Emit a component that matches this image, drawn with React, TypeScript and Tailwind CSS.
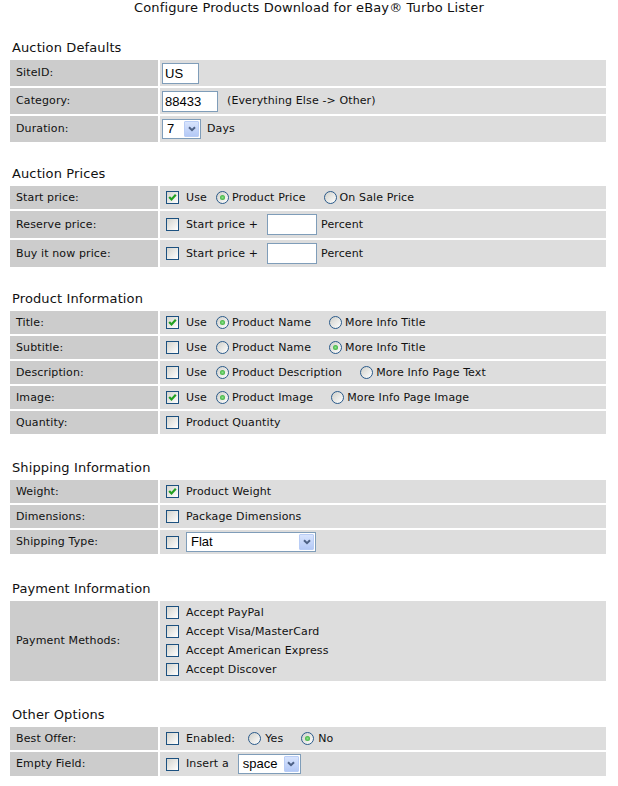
import clsx from 'clsx';

const Check = ({ checked }: { checked?: boolean }) => (
  <span className="ml-[4px] flex h-[13px] w-[13px] shrink-0 items-center justify-center border border-[#1c5180] bg-linear-to-br from-[#d4d4ce] to-white">
    {checked && (
      <svg width="11" height="11" viewBox="0 0 11 11">
        <path d="M2.2 5 L4.5 7.4 L8.8 2.8" stroke="#21a121" strokeWidth="2.2" fill="none" />
      </svg>
    )}
  </span>
);

const Radio = ({ checked, className }: { checked?: boolean; className?: string }) => (
  <span
    className={clsx(
      'flex h-[13px] w-[13px] shrink-0 items-center justify-center rounded-full border border-[#2a5a8a] bg-linear-to-br from-[#d0d0ca] to-white',
      className,
    )}
  >
    {checked && (
      <span className="h-[5px] w-[5px] rounded-full bg-[radial-gradient(circle,#8be08b_0%,#21a121_100%)]" />
    )}
  </span>
);

const TextInput = ({ value, className }: { value: string; className?: string }) => (
  <input
    defaultValue={value}
    className={clsx(
      "h-[21px] border border-[#7f9db9] bg-white px-[2px] font-['Liberation_Sans',Arial,sans-serif] text-[13px] tracking-normal text-black outline-none",
      className,
    )}
  />
);

const Select = ({ value, className }: { value: string; className?: string }) => (
  <span
    className={clsx(
      "flex h-[20px] shrink-0 items-center border border-[#7f9db9] bg-white font-['Liberation_Sans',Arial,sans-serif] text-[13px] tracking-normal text-black",
      className,
    )}
  >
    <span className="flex-1 pl-[4px]">{value}</span>
    <span className="m-px flex h-[16px] w-[15px] items-center justify-center rounded-[1px] border border-[#b9cdf6] bg-linear-to-b from-[#d8e4fd] to-[#b4c9f6]">
      <svg width="8" height="6" viewBox="0 0 8 6">
        <path d="M1 1.2 L4 4.2 L7 1.2" stroke="#4d6185" strokeWidth="2" fill="none" />
      </svg>
    </span>
  </span>
);

const Section = ({
  title,
  className,
  children,
}: {
  title: string;
  className?: string;
  children: React.ReactNode;
}) => (
  <section className={className}>
    <h2 className="h-4 pl-[12px] text-[13px] leading-4 font-normal">{title}</h2>
    <div className="mt-[4px] flex flex-col gap-[2px] pr-[12px] pl-[10px]">{children}</div>
  </section>
);

const Row = ({
  label,
  className,
  children,
}: {
  label: string;
  className?: string;
  children: React.ReactNode;
}) => (
  <div className={clsx('flex gap-[2px]', className)}>
    <div className="flex w-[148px] shrink-0 items-center bg-[#cccccc] pt-px pl-[6px]">{label}</div>
    <div className="flex flex-1 items-center bg-[#dddddd] pl-[2px]">{children}</div>
  </div>
);

/** Use [x]  (o) first  ( ) second */
const UseChoice = ({
  use,
  first,
  second,
  pick,
}: {
  use?: boolean;
  first: string;
  second: string;
  pick: 1 | 2;
}) => (
  <>
    <Check checked={use} />
    <span className="ml-[7px] pt-px">Use</span>
    <Radio checked={pick === 1} className="ml-[9px]" />
    <span className="ml-[3px] pt-px">{first}</span>
    <Radio checked={pick === 2} className="ml-[18px]" />
    <span className="ml-[3px] pt-px">{second}</span>
  </>
);

const CheckLabel = ({ checked, label }: { checked?: boolean; label: string }) => (
  <>
    <Check checked={checked} />
    <span className="ml-[7px] pt-px">{label}</span>
  </>
);

export default function App() {
  return (
    <div className="h-[786px] w-[618px] bg-white font-['DejaVu_Sans',Verdana,sans-serif] text-[11px] tracking-[0.12px] text-[#111]">
      <h1 className="h-4 text-center text-[13px] leading-4 font-normal">
        Configure Products Download for eBay® Turbo Lister
      </h1>

      <Section title="Auction Defaults" className="mt-[24px]">
        <Row label="SiteID:" className="h-[26px]">
          <TextInput value="US" className="w-[37px]" />
        </Row>
        <Row label="Category:" className="h-[26px]">
          <TextInput value="88433" className="w-[56px]" />
          <span className="ml-[9px] pt-px">(Everything Else -&gt; Other)</span>
        </Row>
        <Row label="Duration:" className="h-[26px]">
          <Select value="7" className="w-[39px]" />
          <span className="ml-[6px] pt-px">Days</span>
        </Row>
      </Section>

      <Section title="Auction Prices" className="mt-[24px]">
        <Row label="Start price:" className="h-[23px]">
          <UseChoice use first="Product Price" second="On Sale Price" pick={1} />
        </Row>
        <Row label="Reserve price:" className="h-[27px]">
          <CheckLabel label="Start price +" />
          <TextInput value="" className="ml-[9px] w-[50px]" />
          <span className="ml-[4px] pt-px">Percent</span>
        </Row>
        <Row label="Buy it now price:" className="h-[27px]">
          <CheckLabel label="Start price +" />
          <TextInput value="" className="ml-[9px] w-[50px]" />
          <span className="ml-[4px] pt-px">Percent</span>
        </Row>
      </Section>

      <Section title="Product Information" className="mt-[24px]">
        <Row label="Title:" className="h-[23px]">
          <UseChoice use first="Product Name" second="More Info Title" pick={1} />
        </Row>
        <Row label="Subtitle:" className="h-[23px]">
          <UseChoice first="Product Name" second="More Info Title" pick={2} />
        </Row>
        <Row label="Description:" className="h-[23px]">
          <UseChoice first="Product Description" second="More Info Page Text" pick={1} />
        </Row>
        <Row label="Image:" className="h-[23px]">
          <UseChoice use first="Product Image" second="More Info Page Image" pick={1} />
        </Row>
        <Row label="Quantity:" className="h-[23px]">
          <CheckLabel label="Product Quantity" />
        </Row>
      </Section>

      <Section title="Shipping Information" className="mt-[26px]">
        <Row label="Weight:" className="h-[23px]">
          <CheckLabel checked label="Product Weight" />
        </Row>
        <Row label="Dimensions:" className="h-[23px]">
          <CheckLabel label="Package Dimensions" />
        </Row>
        <Row label="Shipping Type:" className="h-[24px]">
          <Check />
          <Select value="Flat" className="ml-[7px] w-[130px]" />
        </Row>
      </Section>

      <Section title="Payment Information" className="mt-[27px]">
        <Row label="Payment Methods:" className="h-[80px]">
          <div className="flex flex-col">
            {['Accept PayPal', 'Accept Visa/MasterCard', 'Accept American Express', 'Accept Discover'].map(
              (m) => (
                <div key={m} className="flex h-[19px] items-center">
                  <CheckLabel label={m} />
                </div>
              ),
            )}
          </div>
        </Row>
      </Section>

      <Section title="Other Options" className="mt-[26px]">
        <Row label="Best Offer:" className="h-[23px]">
          <CheckLabel label="Enabled:" />
          <Radio className="ml-[13px]" />
          <span className="ml-[4px] pt-px">Yes</span>
          <Radio checked className="ml-[18px]" />
          <span className="ml-[4px] pt-px">No</span>
        </Row>
        <Row label="Empty Field:" className="h-[24px]">
          <CheckLabel label="Insert a" />
          <Select value="space" className="ml-[9px] w-[63px]" />
        </Row>
      </Section>
    </div>
  );
}
